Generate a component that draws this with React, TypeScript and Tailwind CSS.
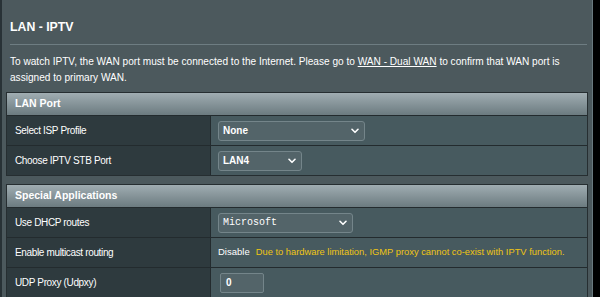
import React from "react";

function Chevron() {
  return (
    <svg width="8" height="6" viewBox="0 0 8 6" className="shrink-0">
      <path d="M1 1.3 L4 4.3 L7 1.3" fill="none" stroke="#ffffff" strokeWidth="1.6" strokeLinecap="round" strokeLinejoin="round" />
    </svg>
  );
}

function Select({ value, width, mono }: { value: string; width: string; mono?: boolean }) {
  return (
    <div
      className={`${width} h-[20px] flex items-center justify-between pl-[4px] pr-[5px] rounded-[3px] border border-[#74858a] bg-[#536469] text-white ${
        mono ? "font-['Liberation_Mono',monospace] text-[10px]" : "text-[10px] font-bold"
      }`}
    >
      <span>{value}</span>
      <Chevron />
    </div>
  );
}

function Row({ label, children }: { label: string; children: React.ReactNode }) {
  return (
    <div className="flex h-[30px] border-t border-[#232b2e]">
      <div className="w-[204px] shrink-0 bg-[#2e3a3e] border-r border-[#232b2e] flex items-center pl-[8px] text-[10px] tracking-[-0.35px] text-white">
        {label}
      </div>
      <div className="flex-1 bg-[#475a5f] flex items-center pl-[7px]">{children}</div>
    </div>
  );
}

function Header({ title }: { title: string }) {
  return (
    <div className="h-[22px] flex items-center pl-[8px] bg-gradient-to-b from-[#a0adb2] to-[#6c7b80] text-white font-bold text-[10.5px]">
      {title}
    </div>
  );
}

export default function App() {
  return (
    <div className="w-[600px] h-[297px] overflow-hidden bg-black flex font-['Liberation_Sans',Arial,sans-serif]">
      <div className="w-[2px] shrink-0 bg-[#283236]" />
      <div className="w-[591px] shrink-0 bg-[#4c595d] border-r border-[#6a797e]">
        <div className="pt-[19px] pl-[8px] text-[12.3px] leading-[16px] font-bold text-white">LAN - IPTV</div>
        <div className="mt-[9px] ml-[8px] w-[577px] h-px bg-[#6e7d82]" />
        <p className="mt-[9px] ml-[8px] w-[577px] text-[10.1px] leading-[16px] text-white">
          To watch IPTV, the WAN port must be connected to the Internet. Please go to{" "}
          <span className="underline">WAN - Dual WAN</span> to confirm that WAN port is assigned to primary WAN.
        </p>
        <div className="mt-[6px] ml-[4px] w-[582px] border border-[#262e31]">
          <Header title="LAN Port" />
          <Row label="Select ISP Profile">
            <Select value="None" width="w-[147px]" />
          </Row>
          <Row label="Choose IPTV STB Port">
            <Select value="LAN4" width="w-[84px]" />
          </Row>
        </div>
        <div className="mt-[8px] ml-[4px] w-[582px] border border-[#262e31]">
          <Header title="Special Applications" />
          <Row label="Use DHCP routes">
            <Select value="Microsoft" width="w-[135px]" mono />
          </Row>
          <Row label="Enable multicast routing">
            <span className="text-[9.5px] text-white">Disable</span>
            <span className="ml-[6px] text-[9.35px] text-[#f0c514]">
              Due to hardware limitation, IGMP proxy cannot co-exist with IPTV function.
            </span>
          </Row>
          <Row label="UDP Proxy (Udpxy)">
            <div className="ml-[2px] w-[44px] h-[20px] flex items-center pl-[5px] rounded-[2px] border border-[#74858a] bg-[#536469] text-white text-[10px] font-bold">
              0
            </div>
          </Row>
        </div>
      </div>
    </div>
  );
}
